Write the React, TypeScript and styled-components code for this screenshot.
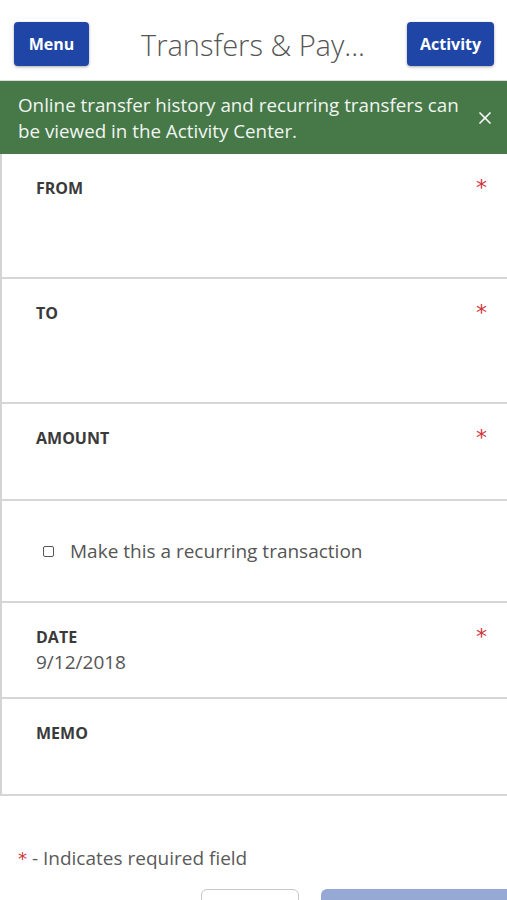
import React from "react";
import styled, {createGlobalStyle} from "styled-components";
import {X} from "lucide-react";

const GlobalStyle = createGlobalStyle`
    html, body {
        margin: 0;
        padding: 0;
        overflow: hidden;
        background: #ffffff;
        font-family: "Open Sans", "Noto Sans", sans-serif;
    }
`;

const Page = styled.div`
    width: 507px;
    height: 900px;
    overflow: hidden;
    background: #ffffff;
`;

const Header = styled.header`
    height: 81px;
    display: flex;
    align-items: flex-start;
    padding: 22px 13px 0 14px;
    box-sizing: border-box;
    border-bottom: 1px solid #dcdcdc;
`;

const HeaderButton = styled.button<{ $width: number }>`
    width: ${p => p.$width}px;
    height: 44px;
    padding: 0;
    border: none;
    border-radius: 4px;
    background: #1f46a6;
    color: #ffffff;
    font-family: "Open Sans", sans-serif;
    font-size: 16px;
    font-weight: 700;
    box-shadow: 0 1px 3px rgba(0, 0, 0, 0.35);
    flex-shrink: 0;
`;

const Title = styled.h1`
    flex: 1;
    margin: 0;
    padding-left: 10px;
    text-align: center;
    font-size: 29px;
    font-weight: 300;
    line-height: 46px;
    color: #555555;
    white-space: nowrap;
`;

const Banner = styled.div`
    display: flex;
    align-items: center;
    background: #467848;
    color: #f1f5f1;
    padding: 11px 12px 10px 18px;
    font-size: 18.8px;
    line-height: 26px;
`;

const BannerText = styled.p`
    flex: 1;
    margin: 0;
`;

const Close = styled.span`
    display: flex;
    color: #ffffff;
`;

const Form = styled.div`
    border-left: 2px solid #d4d4d4;
`;

const Field = styled.div<{ $height: number }>`
    height: ${p => p.$height}px;
    box-sizing: border-box;
    padding: 24px 20px 0 34px;
    border-bottom: 2px solid #d6d6d6;
`;

const LabelRow = styled.div`
    display: flex;
    justify-content: space-between;
    align-items: center;
`;

const Label = styled.span`
    font-size: 16px;
    font-weight: 700;
    line-height: 20px;
    color: #3a3a3a;
`;

const Required = styled.span<{ $size?: number }>`
    color: #d0353b;
    font-size: ${p => p.$size ?? 22}px;
    line-height: 20px;
    font-family: "DejaVu Sans", sans-serif;
`;

const Value = styled.div`
    font-size: 19px;
    line-height: 26px;
    color: #555555;
    margin-top: 2px;
`;

const CheckRow = styled.label`
    height: 102px;
    box-sizing: border-box;
    display: flex;
    align-items: center;
    gap: 16px;
    padding-left: 41px;
    border-bottom: 2px solid #d6d6d6;
    font-size: 19px;
    color: #555555;
`;

const Box = styled.span`
    width: 9px;
    height: 9px;
    border: 1.5px solid #555555;
    border-radius: 2px;
`;

const Note = styled.p`
    margin: 49px 0 0 18px;
    font-size: 19px;
    line-height: 26px;
    color: #5a5a5a;
`;

const Actions = styled.div`
    display: flex;
    gap: 22px;
    margin-top: 18px;
    padding-left: 201px;
`;

const CancelButton = styled.button`
    width: 98px;
    height: 44px;
    flex-shrink: 0;
    background: #ffffff;
    border: 1px solid #c8c8c8;
    border-radius: 6px;
`;

const SubmitButton = styled.button`
    width: 220px;
    height: 44px;
    flex-shrink: 0;
    background: #96a9d4;
    border: none;
    border-radius: 6px;
`;

const fields = [
  {label: "FROM", height: 125, required: true},
  {label: "TO", height: 125, required: true},
  {label: "AMOUNT", height: 97, required: true},
];

export default function App() {
  return (
    <Page>
      <GlobalStyle/>
      <Header>
        <HeaderButton $width={75}>Menu</HeaderButton>
        <Title>Transfers &amp; Pay...</Title>
        <HeaderButton $width={87}>Activity</HeaderButton>
      </Header>
      <Banner>
        <BannerText>Online transfer history and recurring transfers can be viewed in the Activity Center.</BannerText>
        <Close><X size={20} strokeWidth={2}/></Close>
      </Banner>
      <Form>
        {fields.map(f => (
          <Field key={f.label} $height={f.height}>
            <LabelRow>
              <Label>{f.label}</Label>
              {f.required && <Required>*</Required>}
            </LabelRow>
          </Field>
        ))}
        <CheckRow>
          <Box/>
          Make this a recurring transaction
        </CheckRow>
        <Field $height={96}>
          <LabelRow>
            <Label>DATE</Label>
            <Required>*</Required>
          </LabelRow>
          <Value>9/12/2018</Value>
        </Field>
        <Field $height={97}>
          <LabelRow>
            <Label>MEMO</Label>
          </LabelRow>
        </Field>
      </Form>
      <Note><Required $size={18}>*</Required> - Indicates required field</Note>
      <Actions>
        <CancelButton/>
        <SubmitButton/>
      </Actions>
    </Page>
  );
}
